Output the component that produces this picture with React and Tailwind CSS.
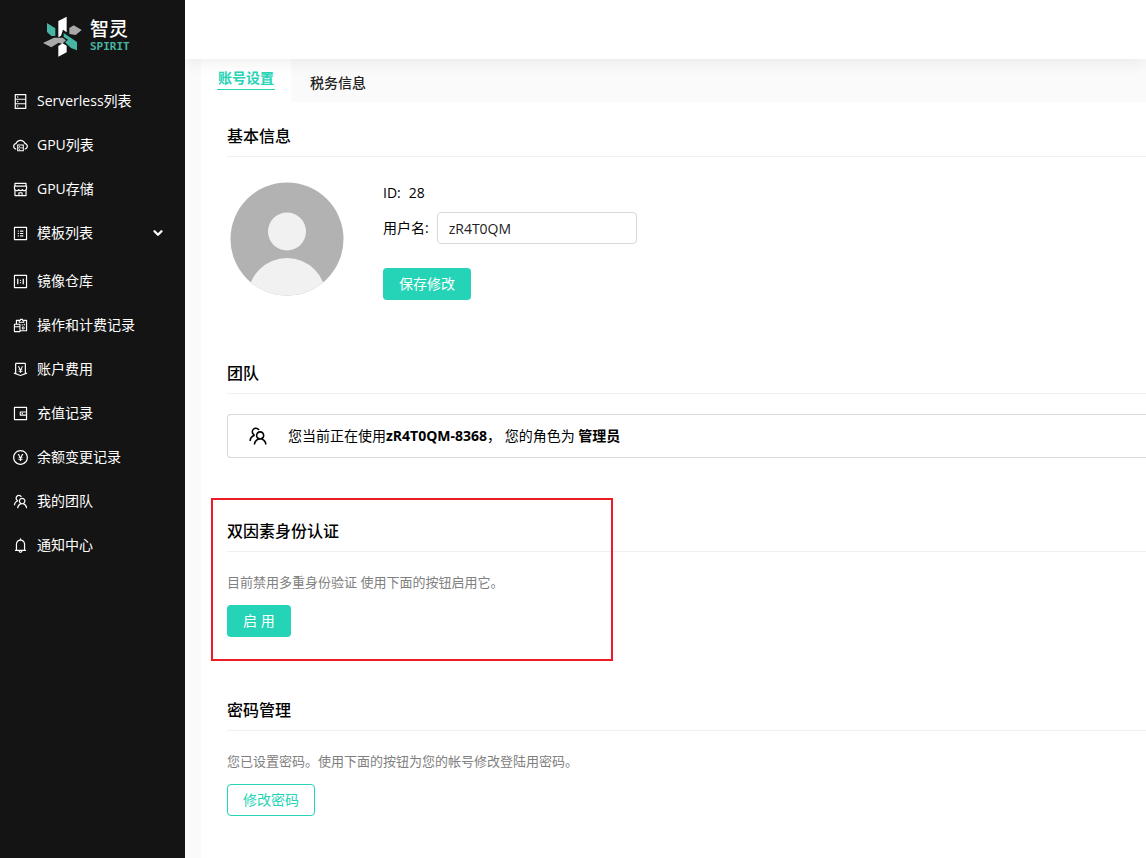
import React from 'react';
import {
    AiOutlineBell,
    AiOutlineCloudServer,
    AiOutlineDatabase,
    AiOutlineMoneyCollect,
    AiOutlineOneToOne,
    AiOutlinePayCircle,
    AiOutlineProfile,
    AiOutlineReconciliation,
    AiOutlineShop,
    AiOutlineTeam,
    AiOutlineWallet,
} from 'react-icons/ai';
import { ChevronDown } from 'lucide-react';

const menus = [
    { name: 'Serverless列表', icon: AiOutlineDatabase },
    { name: 'GPU列表', icon: AiOutlineCloudServer },
    { name: 'GPU存储', icon: AiOutlineShop },
    { name: '模板列表', icon: AiOutlineProfile, children: true },
    { name: '镜像仓库', icon: AiOutlineOneToOne },
    { name: '操作和计费记录', icon: AiOutlineReconciliation },
    { name: '账户费用', icon: AiOutlineMoneyCollect },
    { name: '充值记录', icon: AiOutlineWallet },
    { name: '余额变更记录', icon: AiOutlinePayCircle },
    { name: '我的团队', icon: AiOutlineTeam },
    { name: '通知中心', icon: AiOutlineBell },
];

function Logo() {
    return (
        <a href="#" className="flex h-[71px] items-center gap-1 pl-10">
            <svg width="46" height="46" viewBox="0 0 138 138" aria-hidden="true">
                <path fill="#fff" d="M55 24 80 11V58L69 50 63 68 55 73Z" />
                <path fill="#46b5a3" d="M21 30 46 46V69H34L21 57Z" />
                <path fill="#a9a9a9" d="M88 45 101 37 125 51 107 66 88 63Z" />
                <path fill="#a9a9a9" d="M9 90 42 74H68L78 82 66 93 56 89 34 103Z" />
                <path fill="#46b5a3" d="M71 60 111 87V112L93 105 75 88 84 80 71 72Z" />
                <path fill="#fff" d="M55 99 68 91 80 98V118L55 131Z" />
            </svg>
            <span className="flex flex-col">
                <span className="text-[19px] leading-[22px] font-medium text-white">智灵</span>
                <span className="font-['DejaVu_Sans_Mono',monospace] text-[11px] leading-[14px] font-bold text-[#46b5a3]">
                    SPIRIT
                </span>
            </span>
        </a>
    );
}

function Sidebar() {
    return (
        <aside className="relative z-10 w-[185px] shrink-0 bg-[#141414] text-white">
            <Logo />
            <nav className="mt-2 flex flex-col">
                {menus.map(({ name, icon: Icon, children }) => (
                    <a
                        key={name}
                        href="#"
                        className={
                            children
                                ? 'mb-1 flex h-11 items-center gap-2 pr-5 pl-3'
                                : 'flex h-11 items-center gap-2 pl-3'
                        }
                    >
                        <Icon size={17} />
                        <span>{name}</span>
                        {children && <ChevronDown size={14} strokeWidth={4} className="ml-auto" />}
                    </a>
                ))}
            </nav>
        </aside>
    );
}

function Section({ title, children }) {
    return (
        <section className="relative">
            <h2 className="border-b border-[#f0f0f0] pb-2 text-base leading-6 font-medium">
                {title}
            </h2>
            {children}
        </section>
    );
}

function Avatar() {
    return (
        <svg width="114" height="114" viewBox="0 0 114 114" role="img" aria-label="avatar">
            <clipPath id="avatar">
                <circle cx="57" cy="57" r="56.5" />
            </clipPath>
            <g clipPath="url(#avatar)">
                <rect width="114" height="114" fill="#b2b2b2" />
                <circle cx="57" cy="49.5" r="19" fill="#f1f1f1" />
                <circle cx="57" cy="115" r="39" fill="#f1f1f1" />
            </g>
        </svg>
    );
}

export default function App() {
    return (
        <div className="flex min-h-screen overflow-x-hidden bg-white font-['Open_Sans','Noto_Sans_CJK_SC',sans-serif] text-sm leading-[22px] text-black">
            <Sidebar />
            <div className="flex min-w-0 flex-1 flex-col">
                <header className="relative h-[59px] shrink-0 bg-white shadow-[0_2px_16px_rgba(0,0,0,0.08)]" />
                <main className="flex flex-1 flex-col bg-[#fafafa] pl-4">
                    <div className="flex h-[43px]" role="tablist">
                        <button
                            role="tab"
                            aria-selected="true"
                            className="flex w-[90px] items-start bg-white px-4 pt-2 font-semibold text-[#25d3b6]"
                        >
                            <span className="border-b border-[#25d3b6] px-px">账号设置</span>
                        </button>
                        <button
                            role="tab"
                            aria-selected="false"
                            className="px-[19px] pt-1 font-medium text-[#222]"
                        >
                            税务信息
                        </button>
                    </div>
                    <div className="flex flex-1 flex-col gap-[61px] bg-white pt-[22px] pb-10 pl-[26px]">
                        <Section title="基本信息">
                            <div className="mt-[25px] flex gap-[39px] pl-[3px]">
                                <Avatar />
                                <div className="flex flex-col items-start">
                                    <p className="flex gap-2">
                                        <span>ID:</span>
                                        <span>28</span>
                                    </p>
                                    <div className="mt-2 mb-6 flex items-center gap-2">
                                        <label htmlFor="username">用户名:</label>
                                        <input
                                            id="username"
                                            defaultValue="zR4T0QM"
                                            className="h-8 w-50 rounded border border-[#d9d9d9] px-[11px] text-[#222]"
                                        />
                                    </div>
                                    <button className="h-8 rounded bg-[#25d3b6] px-4 text-white">
                                        保存修改
                                    </button>
                                </div>
                            </div>
                        </Section>
                        <Section title="团队">
                            <div className="mt-5 flex h-11 items-center gap-[19px] rounded-l border border-r-0 border-[#d9d9d9] pl-[19px]">
                                <AiOutlineTeam size={22} />
                                <p>
                                    您当前正在使用<b>zR4T0QM-8368</b>， 您的角色为 <b>管理员</b>
                                </p>
                            </div>
                        </Section>
                        <Section title="双因素身份认证">
                            <div className="pointer-events-none absolute -top-[21px] -left-4 h-[163px] w-[402px] border-2 border-[#ed1c24]" />
                            <p className="mt-5 mb-3 text-[13px] leading-[21px] text-[#808080]">
                                目前禁用多重身份验证 使用下面的按钮启用它。
                            </p>
                            <button className="h-8 rounded bg-[#25d3b6] px-4 text-white">
                                启 用
                            </button>
                        </Section>
                        <Section title="密码管理">
                            <p className="mt-5 mb-3 text-[13px] leading-[21px] text-[#808080]">
                                您已设置密码。使用下面的按钮为您的帐号修改登陆用密码。
                            </p>
                            <button className="h-8 rounded border border-[#25d3b6] px-[15px] text-[#25d3b6]">
                                修改密码
                            </button>
                        </Section>
                    </div>
                </main>
            </div>
        </div>
    );
}
